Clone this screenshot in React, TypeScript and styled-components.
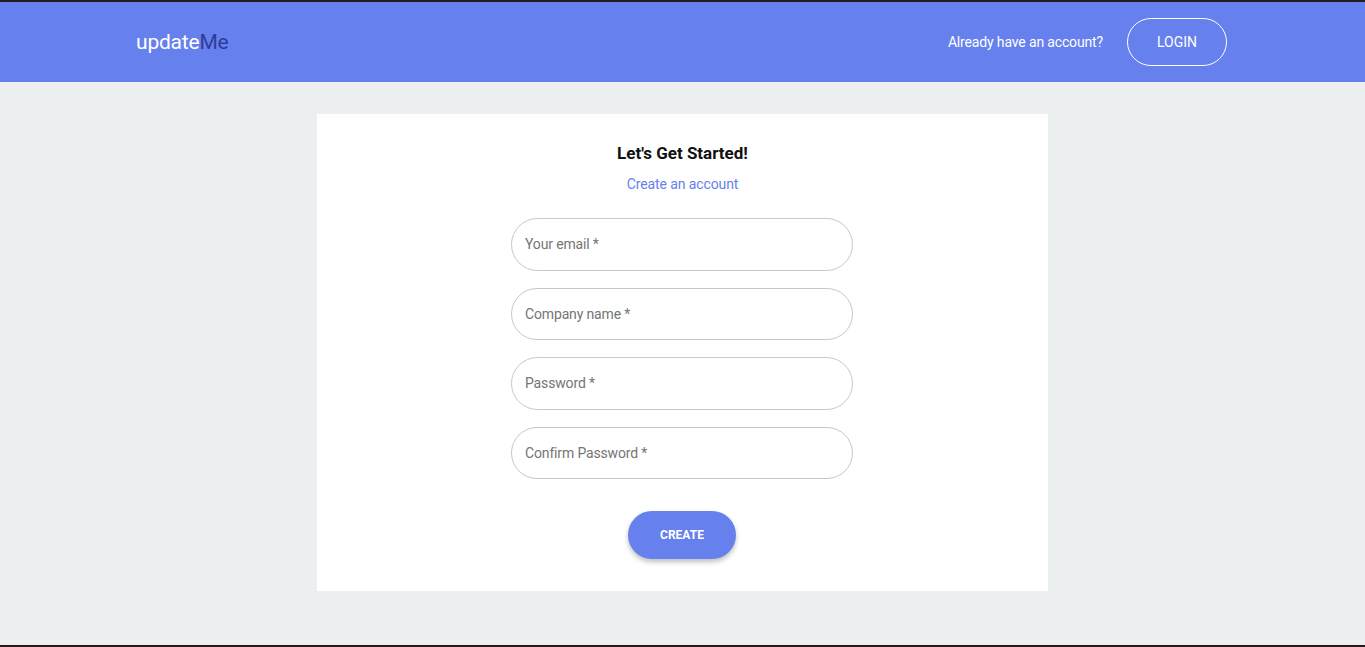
import React from "react";
import styled, { createGlobalStyle } from "styled-components";

const GlobalStyle = createGlobalStyle`
  html, body {
    margin: 0;
    padding: 0;
    background: #ebeff0;
    font-family: Roboto, "Liberation Sans", Arial, sans-serif;
  }
  * {
    box-sizing: border-box;
  }
`;

const Page = styled.div`
  min-height: 647px;
  border-top: 2px solid #1e1e22;
  border-bottom: 2px solid #2a1618;
  display: flex;
  flex-direction: column;
`;

const Header = styled.header`
  height: 80px;
  background: #6680ee;
  display: flex;
  align-items: center;
  justify-content: space-between;
  padding: 0 138px 0 136px;
`;

const Logo = styled.div`
  font-size: 21px;
  color: #ffffff;
  letter-spacing: -0.2px;
`;

const LogoAccent = styled.span`
  color: #2d3c9a;
`;

const HeaderRight = styled.div`
  display: flex;
  align-items: center;
  gap: 24px;
`;

const HeaderText = styled.span`
  color: #ffffff;
  font-size: 14px;
  letter-spacing: -0.15px;
`;

const OutlineButton = styled.button`
  width: 100px;
  height: 48px;
  border: 1px solid #ffffff;
  border-radius: 24px;
  background: transparent;
  color: #ffffff;
  font-family: inherit;
  font-size: 14px;
  cursor: pointer;
`;

const Main = styled.main`
  flex: 1;
  display: flex;
  justify-content: center;
  padding-top: 32px;
`;

const Card = styled.div`
  width: 731px;
  height: 477px;
  background: #ffffff;
  display: flex;
  flex-direction: column;
  align-items: center;
  padding-top: 29px;
`;

const Title = styled.h2`
  margin: 0;
  font-size: 17px;
  font-weight: 700;
  color: #111111;
  line-height: 20px;
`;

const Subtitle = styled.p`
  margin: 12px 0 0;
  font-size: 14px;
  line-height: 18px;
  color: #6680ee;
  letter-spacing: -0.1px;
`;

const Form = styled.form`
  margin-top: 25px;
  display: flex;
  flex-direction: column;
  align-items: center;
  gap: 17px;
  padding-right: 1px;
`;

const Input = styled.input`
  width: 342px;
  height: 52.5px;
  border: 1px solid #c8c8c8;
  border-radius: 27px;
  padding: 0 13px;
  font-family: inherit;
  font-size: 14px;
  letter-spacing: -0.15px;
  color: #333;
  outline: none;
  background: #fff;

  &::placeholder {
    color: #757575;
  }
`;

const SubmitButton = styled.button`
  margin-top: 15px;
  width: 108px;
  height: 48px;
  border: none;
  border-radius: 24px;
  background: #6680ee;
  color: #ffffff;
  font-family: inherit;
  font-size: 12px;
  font-weight: 700;
  box-shadow: 0 3px 5px rgba(0, 0, 0, 0.25);
  cursor: pointer;
`;

const fields = [
  { type: "email", placeholder: "Your email *" },
  { type: "text", placeholder: "Company name *" },
  { type: "password", placeholder: "Password *" },
  { type: "password", placeholder: "Confirm Password *" },
];

const App = (): JSX.Element => {
  return (
    <>
      <GlobalStyle />
      <Page>
        <Header>
          <Logo>
            update<LogoAccent>Me</LogoAccent>
          </Logo>
          <HeaderRight>
            <HeaderText>Already have an account?</HeaderText>
            <OutlineButton>LOGIN</OutlineButton>
          </HeaderRight>
        </Header>
        <Main>
          <Card>
            <Title>Let's Get Started!</Title>
            <Subtitle>Create an account</Subtitle>
            <Form onSubmit={(e) => e.preventDefault()}>
              {fields.map((f, i) => (
                <Input key={i} type={f.type} placeholder={f.placeholder} />
              ))}
              <SubmitButton type="submit">CREATE</SubmitButton>
            </Form>
          </Card>
        </Main>
      </Page>
    </>
  );
};

export default App;
